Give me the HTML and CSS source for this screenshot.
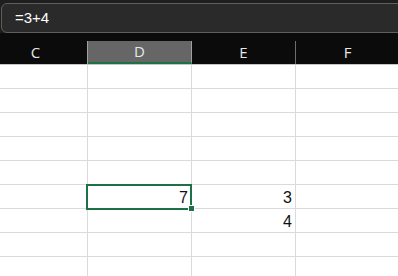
FILE: index.html
```html
<!DOCTYPE html>
<html>
<head>
<meta charset="utf-8">
<link rel="stylesheet" href="styles.css">
</head>
<body>
<div class="app">
  <div class="formula-bar">
    <div class="formula-box">=3+4</div>
  </div>
  <div class="col-headers">
    <div class="hcell">C</div>
    <div class="hcell active">D</div>
    <div class="hcell">E</div>
    <div class="hcell">F</div>
  </div>
  <div class="grid">
    <div class="row"><div class="cell"></div><div class="cell"></div><div class="cell"></div><div class="cell"></div></div>
    <div class="row"><div class="cell"></div><div class="cell"></div><div class="cell"></div><div class="cell"></div></div>
    <div class="row"><div class="cell"></div><div class="cell"></div><div class="cell"></div><div class="cell"></div></div>
    <div class="row"><div class="cell"></div><div class="cell"></div><div class="cell"></div><div class="cell"></div></div>
    <div class="row"><div class="cell"></div><div class="cell"></div><div class="cell"></div><div class="cell"></div></div>
    <div class="row"><div class="cell"></div><div class="cell selected">7</div><div class="cell">3</div><div class="cell"></div></div>
    <div class="row"><div class="cell"></div><div class="cell"></div><div class="cell">4</div><div class="cell"></div></div>
    <div class="row"><div class="cell"></div><div class="cell"></div><div class="cell"></div><div class="cell"></div></div>
    <div class="row"><div class="cell"></div><div class="cell"></div><div class="cell"></div><div class="cell"></div></div>
  </div>
</div>
</body>
</html>
```
FILE: styles.css
```css
html, body {
  margin: 0;
  padding: 0;
  background: #ffffff;
  overflow: hidden;
}
.app {
  width: 398px;
  height: 276px;
  overflow: hidden;
  font-family: "Liberation Sans", Arial, sans-serif;
}
.formula-bar {
  background: #1e1e1e;
  height: 33px;
  padding: 3px 0 0 1px;
  box-sizing: border-box;
}
.formula-box {
  width: 420px;
  height: 30px;
  box-sizing: border-box;
  border: 1px solid #5e5e5e;
  border-radius: 6px;
  background: #2a2a2a;
  color: #ffffff;
  font-size: 15px;
  line-height: 28px;
  padding-left: 13px;
}
.col-headers {
  display: flex;
  background: #0b0b0b;
  padding-top: 8px;
  box-sizing: border-box;
  margin-left: -16px;
  border-bottom: 1px solid #c6c6c6;
  height: 32px;
}
.hcell {
  flex: 0 0 104px;
  box-sizing: border-box;
  height: 23px;
  border-right: 1px solid #6e6e6e;
  color: #e8e8e8;
  font-family: "Open Sans", "Noto Sans", sans-serif;
  font-size: 15px;
  line-height: 22px;
  text-align: center;
}
.hcell.active {
  background: #666666;
  border-right: 1px solid #a0a0a0;
  border-bottom: 2px solid #1e7145;
  line-height: 21px;
}
.col-headers .hcell:first-child {
  border-right-color: #a0a0a0;
}
.grid {
  margin-left: -16px;
}
.row {
  display: flex;
  height: 24px;
  box-sizing: border-box;
  border-bottom: 1px solid #dadada;
}
.cell {
  flex: 0 0 104px;
  box-sizing: border-box;
  border-right: 1px solid #dadada;
  color: #111111;
  font-size: 16px;
  line-height: 21px;
  padding-top: 2px;
  padding-right: 3px;
  text-align: right;
}
.cell.selected {
  position: relative;
}
.cell.selected::after {
  content: "";
  position: absolute;
  left: -2px;
  top: -1px;
  right: -1px;
  bottom: -2px;
  border: 2px solid #1e7145;
}
.cell.selected::before {
  content: "";
  position: absolute;
  right: -4px;
  bottom: -4px;
  width: 5px;
  height: 5px;
  background: #1e7145;
  border: 1px solid #ffffff;
  z-index: 2;
}
```
